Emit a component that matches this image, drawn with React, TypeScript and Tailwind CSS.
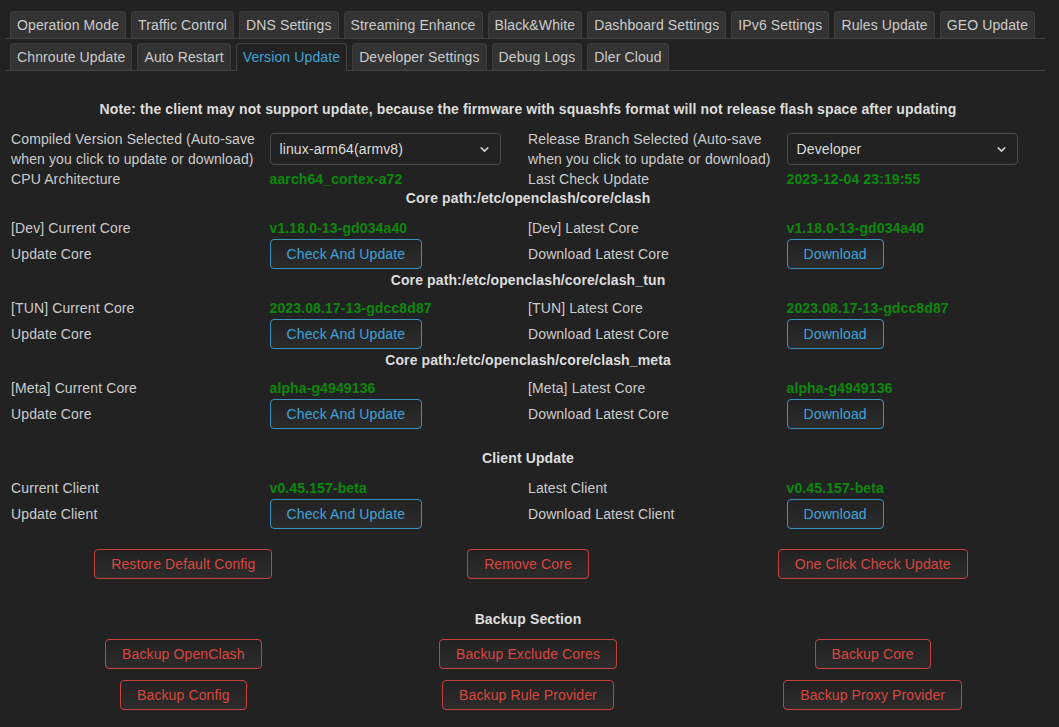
import React from 'react';
import { ChevronDown } from 'lucide-react';

const TABS_1 = ['Operation Mode', 'Traffic Control', 'DNS Settings', 'Streaming Enhance', 'Black&White', 'Dashboard Settings', 'IPv6 Settings', 'Rules Update', 'GEO Update'];
const TABS_2 = ['Chnroute Update', 'Auto Restart', 'Version Update', 'Developer Settings', 'Debug Logs', 'Dler Cloud'];

const TabRow = ({ items, active }: { items: string[]; active?: string }) => (
  <div className="ml-[5px] w-[1040px] pl-[5px] flex items-end gap-[5px] border-b border-[#444]">
    {items.map((t) =>
      t === active ? (
        <div key={t} className="h-[28px] -mb-px px-[6px] flex items-center border border-b-0 border-[#444] rounded-t-[4px] bg-[#222] text-[#3fa2d9]">
          {t}
        </div>
      ) : (
        <div key={t} className="h-[27px] px-[6px] flex items-center border border-b-0 border-[#3c3c3c] rounded-t-[4px] bg-[#333] text-[#ccc]">
          {t}
        </div>
      )
    )}
  </div>
);

const Btn = ({ children, red }: { children: React.ReactNode; red?: boolean }) => (
  <button
    className={`h-[30px] px-4 rounded-[4px] border bg-linear-to-b from-[#222] to-[#2c2c2c] whitespace-nowrap ${
      red ? 'border-[#c9413e] text-[#d9463f]' : 'border-[#3793c2] text-[#3fa2d9]'
    }`}
  >
    {children}
  </button>
);

const Select = ({ value }: { value: string }) => (
  <div className="relative w-[231px] h-[32px]">
    <select
      defaultValue={value}
      className="appearance-none w-full h-full pl-[9px] rounded-[4px] border border-[#4d4d4d] bg-[#222] text-[#ddd] outline-none"
    >
      <option>{value}</option>
    </select>
    <ChevronDown className="absolute right-[10px] top-[10px] text-[#ccc] pointer-events-none" size={13} strokeWidth={3} />
  </div>
);

const Green = ({ children }: { children: React.ReactNode }) => (
  <span className="font-bold text-[#0d880d]">{children}</span>
);

const Row = ({ cells, h = 'h-[20px]', mt = '' }: { cells: React.ReactNode[]; h?: string; mt?: string }) => (
  <div className={`grid grid-cols-4 items-center ${h} ${mt}`}>
    {cells.map((c, i) => (
      <div key={i} className="text-[#ccc]">{c}</div>
    ))}
  </div>
);

const Heading = ({ children, mt = '' }: { children: React.ReactNode; mt?: string }) => (
  <div className={`h-[20px] flex items-center justify-center font-bold text-[#ddd] ${mt}`}>{children}</div>
);

const CoreBlock = ({ tag, path, version, gap }: { tag: string; path: string; version: string; gap: string }) => (
  <>
    <Heading>Core path:{path}</Heading>
    <Row
      mt={gap}
      cells={[`[${tag}] Current Core`, <Green>{version}</Green>, `[${tag}] Latest Core`, <Green>{version}</Green>]}
    />
    <Row
      h="h-[32px]"
      cells={['Update Core', <Btn>Check And Update</Btn>, 'Download Latest Core', <Btn>Download</Btn>]}
    />
  </>
);

export default function App() {
  return (
    <div
      className="w-[1059px] h-[727px] bg-[#222] text-[14px] tracking-[0.12px] overflow-hidden"
      style={{ fontFamily: '"Liberation Sans", Arial, sans-serif' }}
    >
      <div className="pt-[11px] flex flex-col gap-[4px]">
        <TabRow items={TABS_1} />
        <TabRow items={TABS_2} active="Version Update" />
      </div>

      <div className="w-[1056px] px-[11px]">
        <Heading mt="mt-[28px]">
          Note: the client may not support update, because the firmware with squashfs format will not release flash space after updating
        </Heading>

        <div className="grid grid-cols-4 items-center h-[40px] mt-[10px] text-[#ccc] leading-[20px]">
          <div>Compiled Version Selected (Auto-save<br />when you click to update or download)</div>
          <div><Select value="linux-arm64(armv8)" /></div>
          <div>Release Branch Selected (Auto-save<br />when you click to update or download)</div>
          <div><Select value="Developer" /></div>
        </div>
        <Row
          h="h-[19px]"
          cells={['CPU Architecture', <Green>aarch64_cortex-a72</Green>, 'Last Check Update', <Green>2023-12-04 23:19:55</Green>]}
        />

        <CoreBlock tag="Dev" path="/etc/openclash/core/clash" version="v1.18.0-13-gd034a40" gap="mt-[10px]" />
        <CoreBlock tag="TUN" path="/etc/openclash/core/clash_tun" version="2023.08.17-13-gdcc8d87" gap="mt-[8px]" />
        <CoreBlock tag="Meta" path="/etc/openclash/core/clash_meta" version="alpha-g4949136" gap="mt-[8px]" />

        <Heading mt="mt-[18px]">Client Update</Heading>
        <Row
          mt="mt-[10px]"
          cells={['Current Client', <Green>v0.45.157-beta</Green>, 'Latest Client', <Green>v0.45.157-beta</Green>]}
        />
        <Row
          h="h-[32px]"
          cells={['Update Client', <Btn>Check And Update</Btn>, 'Download Latest Client', <Btn>Download</Btn>]}
        />

        <div className="grid grid-cols-3 justify-items-center items-center h-[32px] mt-[18px]">
          <Btn red>Restore Default Config</Btn>
          <Btn red>Remove Core</Btn>
          <Btn red>One Click Check Update</Btn>
        </div>

        <Heading mt="mt-[29px]">Backup Section</Heading>
        <div className="grid grid-cols-3 justify-items-center items-center h-[32px] mt-[9px]">
          <Btn red>Backup OpenClash</Btn>
          <Btn red>Backup Exclude Cores</Btn>
          <Btn red>Backup Core</Btn>
        </div>
        <div className="grid grid-cols-3 justify-items-center items-center h-[32px] mt-[9px]">
          <Btn red>Backup Config</Btn>
          <Btn red>Backup Rule Provider</Btn>
          <Btn red>Backup Proxy Provider</Btn>
        </div>
      </div>
    </div>
  );
}
